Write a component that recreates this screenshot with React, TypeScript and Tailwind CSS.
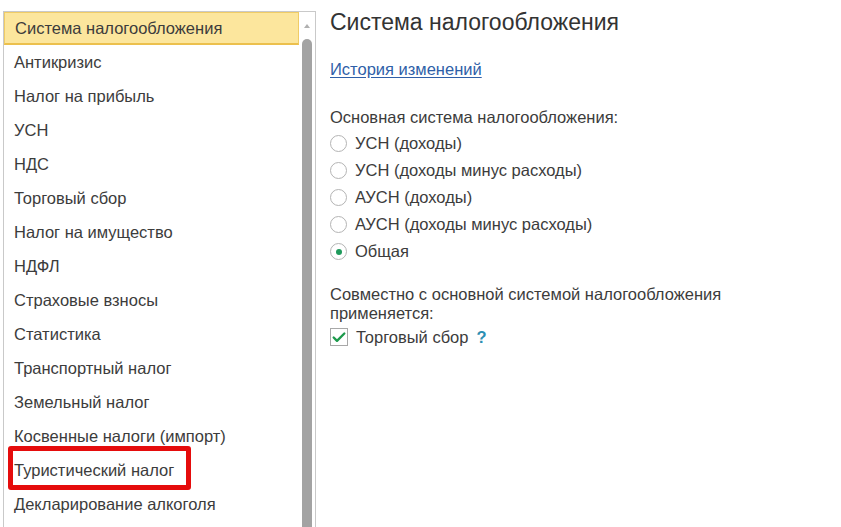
import { Check } from "lucide-react";

const items = [
    "Система налогообложения",
    "Антикризис",
    "Налог на прибыль",
    "УСН",
    "НДС",
    "Торговый сбор",
    "Налог на имущество",
    "НДФЛ",
    "Страховые взносы",
    "Статистика",
    "Транспортный налог",
    "Земельный налог",
    "Косвенные налоги (импорт)",
    "Туристический налог",
    "Декларирование алкоголя",
];

const systems = [
    "УСН (доходы)",
    "УСН (доходы минус расходы)",
    "АУСН (доходы)",
    "АУСН (доходы минус расходы)",
    "Общая",
];

function Radio({ checked }: { checked?: boolean }) {
    return (
        <span className="w-[17px] h-[17px] rounded-full border border-[#b4b4b4] bg-white flex items-center justify-center shrink-0">
            {checked && <span className="w-[6px] h-[6px] rounded-full bg-[#1f9a5c]" />}
        </span>
    );
}

export default function App() {
    return (
        <div className="w-[841px] h-[527px] overflow-hidden bg-white flex font-['Liberation_Sans',Arial,sans-serif] text-[#3c3c3c]">
            <aside className="ml-[3px] mt-[11px] w-[313px] h-[540px] border-l border-t border-r border-[#c9c9c9] flex">
                <ul className="flex-1">
                    {items.map((item, i) => {
                        if (i === 0) {
                            return (
                                <li
                                    key={item}
                                    className="h-[33px] pl-[10px] pt-[1px] flex items-center text-[16.5px] bg-[#fce69d] border border-[#f0cc66] border-b-2 border-b-[#ecc04d]">
                                    {item}
                                </li>
                            );
                        }
                        if (item === "Туристический налог") {
                            return (
                                <li key={item} className="h-[34px] flex items-center">
                                    <span className="ml-[4px] -mt-[4px] h-[44px] w-[183px] border-[5px] border-[#e50c0c] rounded-[3px] flex items-center pl-[1px] pt-[4px] text-[16.5px]">
                                        {item}
                                    </span>
                                </li>
                            );
                        }
                        return (
                            <li key={item} className="h-[34px] pl-[10px] flex items-center text-[16.5px]">
                                {item}
                            </li>
                        );
                    })}
                </ul>
                <div className="w-[16px] flex flex-col items-center pt-[12px]">
                    <span className="w-0 h-0 border-l-[3px] border-r-[3px] border-b-[4px] border-l-transparent border-r-transparent border-b-[#b0b0b0]" />
                    <span className="mt-[11px] w-[10px] flex-1 rounded-t-[5px] bg-[#a3a3a3]" />
                </div>
            </aside>

            <main className="pl-[14px] pt-[8px]">
                <h1 className="text-[23px] leading-[28px] text-[#333]">Система налогообложения</h1>

                <a href="#" className="block mt-[24px] text-[16.5px] leading-[18px] text-[#2f5fa8] underline underline-offset-2">
                    История изменений
                </a>

                <p className="mt-[30px] text-[16.5px] leading-[18px]">Основная система налогообложения:</p>

                <div className="mt-[4px] flex flex-col">
                    {systems.map((s) => (
                        <label key={s} className="h-[27px] flex items-center gap-[8px] text-[16.5px]">
                            <Radio checked={s === "Общая"} />
                            {s}
                        </label>
                    ))}
                </div>

                <p className="mt-[20px] w-[420px] text-[16.5px] leading-[19px]">
                    Совместно с основной системой налогообложения применяется:
                </p>

                <div className="mt-[2px] flex items-center gap-[8px] text-[16.5px]">
                    <span className="w-[18px] h-[18px] border border-[#a8a8a8] bg-white flex items-center justify-center">
                        <Check size={17} strokeWidth={3.5} className="text-[#1d9a4c]" />
                    </span>
                    Торговый сбор
                    <span className="text-[#2d8fb3] font-bold">?</span>
                </div>
            </main>
        </div>
    );
}
